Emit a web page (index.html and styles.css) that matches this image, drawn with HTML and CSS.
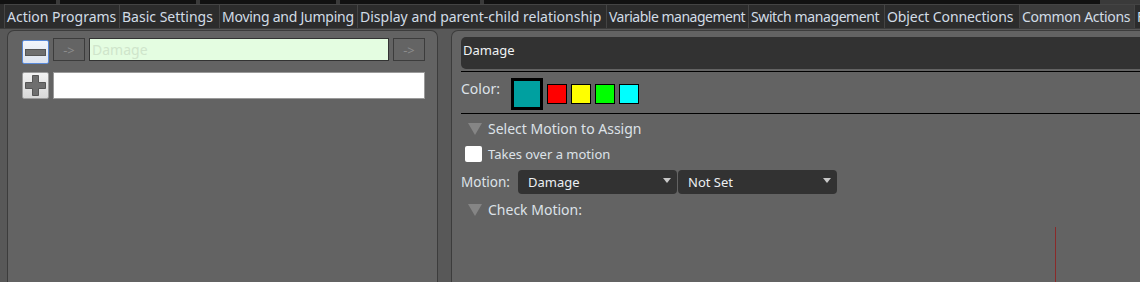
FILE: index.html
```html
<!DOCTYPE html>
<html lang="en">
<head>
    <meta charset="UTF-8">
    <title>Action Editor</title>
    <link rel="stylesheet" href="styles.css">
</head>

<body>
    <div class="top-strip">
        <span class="seg" style="width: 56px;"></span>
        <span class="seg" style="width: 136px;"></span>
        <span class="seg" style="width: 136px;"></span>
        <span class="seg" style="width: 140px;"></span>
        <span class="seg" style="width: 616px;"></span>
    </div>

    <div class="tabs">
        <div class="tab">Action Programs</div>
        <div class="tab">Basic Settings</div>
        <div class="tab">Moving and Jumping</div>
        <div class="tab">Display and parent-child relationship</div>
        <div class="tab">Variable management</div>
        <div class="tab">Switch management</div>
        <div class="tab">Object Connections</div>
        <div class="tab active">Common Actions</div>
        <div class="tab">Flags</div>
    </div>

    <div class="workspace">
        <div class="panel list-panel">
            <div class="list-row">
                <button class="icon-btn minus">
                    <svg width="21" height="7" viewBox="0 0 21 7"><rect x="0.5" y="0.5" width="20" height="6" fill="#6e6e6e" stroke="#555"/></svg>
                </button>
                <button class="arrow-btn">-&gt;</button>
                <input class="name-input" type="text" placeholder="Damage">
                <button class="arrow-btn">-&gt;</button>
            </div>
            <div class="list-row second">
                <button class="icon-btn plus">
                    <svg width="21" height="21" viewBox="0 0 21 21"><path d="M7.5 0.5h6v7h7v6h-7v7h-6v-7h-7v-6h7z" fill="#6e6e6e" stroke="#555"/></svg>
                </button>
                <input class="new-input" type="text">
            </div>
        </div>

        <div class="panel detail-panel">
            <div class="title-field">Damage</div>
            <div class="rule"></div>

            <div class="color-row">
                <span class="label">Color:</span>
                <span class="swatch big" style="background: #00a0a0;"></span>
                <span class="swatch" style="background: #ff0000;"></span>
                <span class="swatch" style="background: #ffff00;"></span>
                <span class="swatch" style="background: #00ff00;"></span>
                <span class="swatch" style="background: #00ffff;"></span>
            </div>
            <div class="rule"></div>

            <div class="section-head">
                <svg class="tri" width="14" height="12" viewBox="0 0 14 12"><polygon points="0,0 14,0 7,12" fill="#858585"/></svg>
                <span>Select Motion to Assign</span>
            </div>

            <label class="check-row">
                <span class="checkbox"></span>
                <span>Takes over a motion</span>
            </label>

            <div class="motion-row">
                <span class="label">Motion:</span>
                <div class="dropdown">
                    <span>Damage</span>
                    <svg width="8" height="5" viewBox="0 0 8 5"><polygon points="0,0 8,0 4,5" fill="#c8c8c8"/></svg>
                </div>
                <div class="dropdown">
                    <span>Not Set</span>
                    <svg width="8" height="5" viewBox="0 0 8 5"><polygon points="0,0 8,0 4,5" fill="#c8c8c8"/></svg>
                </div>
            </div>

            <div class="section-head check">
                <svg class="tri" width="14" height="12" viewBox="0 0 14 12"><polygon points="0,0 14,0 7,12" fill="#858585"/></svg>
                <span>Check Motion:</span>
            </div>

            <div class="motion-view">
                <div class="preview"></div>
                <div class="timeline"></div>
            </div>
        </div>
    </div>
</body>
</html>
```

FILE: styles.css
```css
body {
    margin: 0;
    width: 1140px;
    height: 282px;
    overflow: hidden;
    background: #585858;
    font-family: 'Noto Sans', sans-serif;
    color: #dde2e8;
}

.top-strip {
    display: flex;
    gap: 4px;
    height: 4px;
    background: #3a3a3a;
}

.top-strip .seg {
    background: #111;
}

.tabs {
    display: flex;
    height: 24px;
    padding-left: 4px;
    background: #2c2c2c;
    border-bottom: 1px solid #3c3c3c;
    overflow: hidden;
}

.tab {
    flex: none;
    box-sizing: border-box;
    padding: 0 2px;
    font-size: 14px;
    line-height: 23px;
    color: #d2dce6;
    border-left: 1px solid #444;
    border-top: 1px solid #444;
    white-space: nowrap;
    overflow: hidden;
}

/* tab widths follow the original widget, its font runs a bit wider/narrower */
.tab:nth-child(1) { width: 115px; }
.tab:nth-child(2) { width: 100px; }
.tab:nth-child(3) { width: 138px; letter-spacing: -0.25px; }
.tab:nth-child(4) { width: 249px; }
.tab:nth-child(5) { width: 142px; letter-spacing: -0.5px; }
.tab:nth-child(6) { width: 136px; letter-spacing: -0.4px; }
.tab:nth-child(7) { width: 135px; letter-spacing: -0.1px; }
.tab:nth-child(8) { width: 115px; letter-spacing: -0.3px; }
.tab:nth-child(9) { width: 40px; }

.tab.active {
    background: #3c3c3c;
}

.workspace {
    display: flex;
    gap: 13px;
    padding: 1px 0 0 7px;
    height: 254px;
}

.panel {
    background: #636363;
    border: 1px solid #3c3c3c;
    border-bottom: none;
    border-radius: 7px 7px 0 0;
}

.list-panel {
    width: 431px;
    flex: none;
    padding: 7px 0 0 14px;
    box-sizing: border-box;
}

.list-row {
    display: flex;
    align-items: flex-start;
    gap: 4px;
    height: 34px;
}

.list-row.second {
    height: 28px;
}

.icon-btn {
    width: 27px;
    height: 27px;
    padding: 0;
    border: 1px solid #9a9a9a;
    border-radius: 2px;
    background: linear-gradient(#f2f2f2, #d8d8d8);
    display: flex;
    align-items: center;
    justify-content: center;
}

.icon-btn.minus {
    height: 24px;
    margin-top: 2px;
    border-color: #5a8ad8;
    background: linear-gradient(#f2f5fb, #dde3ee);
}

.arrow-btn {
    width: 32px;
    height: 23px;
    padding: 0;
    border: 1px solid #3c3c3c;
    background: #646464;
    color: #8c8c8c;
    font-family: 'Noto Sans', sans-serif;
    font-size: 13px;
    line-height: 20px;
}

.name-input {
    width: 300px;
    height: 23px;
    box-sizing: border-box;
    border: 1px solid #333;
    background: #e4fde1;
    font-family: 'Noto Sans', sans-serif;
    font-size: 14px;
    padding: 0 2px;
    margin: 0;
}

.name-input::placeholder {
    color: #cfe5cb;
}

.new-input {
    width: 372px;
    height: 27px;
    box-sizing: border-box;
    border: 1px solid #9a9a9a;
    background: #fff;
    margin: 0;
}

.detail-panel {
    flex: none;
    width: 720px;
    padding: 6px 0 0 9px;
    box-sizing: border-box;
    font-size: 13px;
}

.title-field {
    height: 32px;
    background: #323232;
    border-radius: 5px 0 0 5px;
    color: #f0f2f5;
    padding-left: 2px;
    line-height: 26px;
}

.rule {
    height: 1px;
    margin-top: 2px;
    background: #000;
}

.color-row {
    display: flex;
    align-items: flex-start;
    height: 39px;
    padding-top: 6px;
    box-sizing: border-box;
}

.color-row .label {
    width: 50px;
    font-size: 14px;
    line-height: 18px;
    margin-top: 2px;
}

.swatch {
    width: 20px;
    height: 20px;
    box-sizing: border-box;
    border: 1px solid #000;
    margin: 6px 0 0 4px;
}

.swatch.big {
    width: 32px;
    height: 32px;
    border-width: 3px;
    margin: 0;
}

.section-head {
    display: flex;
    align-items: center;
    gap: 6px;
    height: 20px;
    margin-top: 4px;
    padding-left: 7px;
    font-size: 14px;
}

.section-head .tri {
    margin-top: 2px;
}

.section-head.check {
    margin-top: 5px;
}

.check-row {
    display: flex;
    align-items: center;
    gap: 6px;
    height: 20px;
    margin-top: 6px;
    padding-left: 4px;
}

.checkbox {
    width: 17px;
    height: 16px;
    background: #fff;
    border-radius: 2px;
}

.motion-row {
    display: flex;
    align-items: center;
    height: 24px;
    margin-top: 6px;
}

.motion-row .label {
    width: 57px;
    font-size: 13.5px;
}

.dropdown {
    display: flex;
    align-items: center;
    justify-content: space-between;
    width: 159px;
    height: 24px;
    box-sizing: border-box;
    padding: 0 6px 0 10px;
    margin-right: 1px;
    background: #323232;
    border-radius: 4px;
    color: #eceff2;
}

.dropdown svg {
    margin-top: -3px;
}

.motion-view {
    display: grid;
    grid-template-columns: 594px 1fr;
    height: 60px;
    margin-top: 8px;
}

.timeline {
    border-left: 1px solid #8a2a2a;
}
```
